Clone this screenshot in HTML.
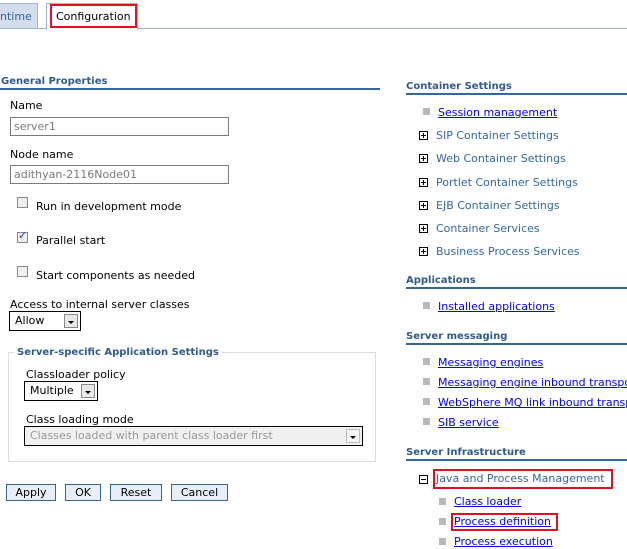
<!DOCTYPE html>
<html><head><style>
body{margin:0;width:627px;height:549px;background:#fff;position:relative;overflow:hidden;font-family:"DejaVu Sans",Verdana,sans-serif;font-size:11px;color:#000}
.a{position:absolute;white-space:nowrap}
.h{font-weight:bold;color:#2f5a8a;font-size:10px}
.ul{position:absolute;height:2px;background:#336699}
.in{position:absolute;border:1px solid #7a7a7a;height:17px;box-sizing:border-box;color:#777;padding-left:3px;line-height:15px}
.lnk{color:#0000ee;text-decoration:underline}
.sq{position:absolute;width:7px;height:7px;background:#b8b8b8}
.pl{position:absolute;width:7px;height:7px;border:1px solid #000;font-size:0}
.pl::before{content:"";position:absolute;left:1px;top:3px;width:5px;height:1px;background:#000}
.pl.p::after{content:"";position:absolute;left:3px;top:1px;width:1px;height:5px;background:#000}
.t{color:#33679a}
.cb{position:absolute;width:11px;height:11px;border:1px solid #8a8a8a;background:#eee;box-sizing:border-box}
.sel{position:absolute;border:1px solid #000;height:20px;box-sizing:border-box;line-height:18px;padding-left:5px}
.dd{position:absolute;right:2px;top:2px;width:14px;height:14px;border:1px solid #888;background:#e8e8e8;box-sizing:border-box}
.dd::after{content:"";position:absolute;left:3px;top:6px;border-left:3px solid transparent;border-right:3px solid transparent;border-top:3px solid #000}
.btn{position:absolute;top:484px;height:17px;border:1px solid #33679a;background:#e8eef7;box-sizing:border-box;text-align:center;line-height:15px}
.red{position:absolute;border:2px solid #e0101e;box-sizing:border-box}
</style></head><body>
<div class="a" style="left:0;top:28px;width:627px;height:1px;background:#9fb5d6"></div>
<div class="a" style="left:-2px;top:3px;width:40px;height:26px;background:#d3dded;border:1px solid #9fb5d6;box-sizing:border-box"></div>
<div class="a" style="left:0;top:10px;color:#33679a">ntime</div>
<div class="a" style="left:46px;top:3px;width:92px;height:27px;background:#fff;border:1px solid #9fb5d6;border-bottom:none;box-sizing:border-box"></div>
<div class="red" style="left:50px;top:4px;width:87px;height:24px"></div>
<div class="a" style="left:56px;top:10px">Configuration</div>

<div class="a h" style="left:1px;top:76px">General Properties</div>
<div class="ul" style="left:0;top:88px;width:380px"></div>
<div class="a" style="left:10px;top:99px">Name</div>
<div class="in" style="left:10px;top:117px;width:219px;height:19px;line-height:17px">server1</div>
<div class="a" style="left:10px;top:148px">Node name</div>
<div class="in" style="left:10px;top:165px;width:219px;height:19px;line-height:17px">adithyan-2116Node01</div>
<div class="cb" style="left:17px;top:197px"></div>
<div class="a" style="left:36px;top:200px">Run in development mode</div>
<div class="cb" style="left:17px;top:232px"></div>
<div class="a" style="left:18px;top:229px;color:#2244aa;font-size:11px;font-weight:bold">✓</div>
<div class="a" style="left:36px;top:234px">Parallel start</div>
<div class="cb" style="left:17px;top:266px"></div>
<div class="a" style="left:36px;top:269px">Start components as needed</div>
<div class="a" style="left:10px;top:298px">Access to internal server classes</div>
<div class="sel" style="left:9px;top:311px;width:72px">Allow<div class="dd"></div></div>

<div class="a" style="left:8px;top:352px;width:368px;height:110px;border:1px solid #ddd;box-sizing:border-box"></div>
<div class="a h" style="left:14px;top:347px;background:#fff;padding:0 3px">Server-specific Application Settings</div>
<div class="a" style="left:26px;top:368px">Classloader policy</div>
<div class="sel" style="left:24px;top:381px;width:74px">Multiple<div class="dd"></div></div>
<div class="a" style="left:26px;top:413px">Class loading mode</div>
<div class="sel" style="left:24px;top:426px;width:339px;background:#f0f0f0;color:#999">Classes loaded with parent class loader first<div class="dd" style="border-color:#bbb;background:#f4f4f4"></div></div>

<div class="btn" style="left:6px;width:50px">Apply</div>
<div class="btn" style="left:65px;width:36px">OK</div>
<div class="btn" style="left:110px;width:52px">Reset</div>
<div class="btn" style="left:171px;width:57px">Cancel</div>

<div class="a h" style="left:406px;top:81px">Container Settings</div>
<div class="ul" style="left:406px;top:93px;width:221px"></div>
<div class="sq" style="left:423px;top:108px"></div><div class="a lnk" style="left:438px;top:106px">Session management</div>
<div class="pl p" style="left:419px;top:131px"></div><div class="a t" style="left:436px;top:129px">SIP Container Settings</div>
<div class="pl p" style="left:419px;top:154px"></div><div class="a t" style="left:436px;top:152px">Web Container Settings</div>
<div class="pl p" style="left:419px;top:178px"></div><div class="a t" style="left:436px;top:176px">Portlet Container Settings</div>
<div class="pl p" style="left:419px;top:201px"></div><div class="a t" style="left:436px;top:199px">EJB Container Settings</div>
<div class="pl p" style="left:419px;top:224px"></div><div class="a t" style="left:436px;top:222px">Container Services</div>
<div class="pl p" style="left:419px;top:247px"></div><div class="a t" style="left:436px;top:245px">Business Process Services</div>

<div class="a h" style="left:406px;top:275px">Applications</div>
<div class="ul" style="left:406px;top:287px;width:221px"></div>
<div class="sq" style="left:423px;top:302px"></div><div class="a lnk" style="left:438px;top:300px">Installed applications</div>

<div class="a h" style="left:406px;top:331px">Server messaging</div>
<div class="ul" style="left:406px;top:343px;width:221px"></div>
<div class="sq" style="left:423px;top:358px"></div><div class="a lnk" style="left:438px;top:356px">Messaging engines</div>
<div class="sq" style="left:423px;top:378px"></div><div class="a lnk" style="left:438px;top:376px">Messaging engine inbound transports</div>
<div class="sq" style="left:423px;top:398px"></div><div class="a lnk" style="left:438px;top:396px">WebSphere MQ link inbound transports</div>
<div class="sq" style="left:423px;top:418px"></div><div class="a lnk" style="left:438px;top:416px">SIB service</div>

<div class="a h" style="left:406px;top:447px">Server Infrastructure</div>
<div class="ul" style="left:406px;top:459px;width:221px"></div>
<div class="pl" style="left:419px;top:475px"></div>
<div class="red" style="left:433px;top:469px;width:180px;height:20px"></div>
<div class="a t" style="left:436px;top:472px">Java and Process Management</div>
<div class="sq" style="left:439px;top:498px"></div><div class="a lnk" style="left:454px;top:495px">Class loader</div>
<div class="sq" style="left:439px;top:518px"></div>
<div class="red" style="left:451px;top:513px;width:107px;height:18px"></div>
<div class="a lnk" style="left:454px;top:515px">Process definition</div>
<div class="sq" style="left:439px;top:538px"></div><div class="a lnk" style="left:454px;top:535px">Process execution</div>
</body></html>
